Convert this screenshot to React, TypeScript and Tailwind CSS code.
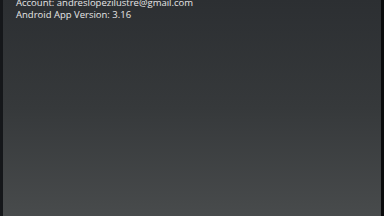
export default function App() {
  return (
    <div className="flex h-[216px] w-[384px] overflow-hidden bg-black">
      <div className="w-[3px] shrink-0 bg-[#15171a]" />
      <div
        className="flex-1 bg-gradient-to-b from-[#2c2f32] via-[#36393b] to-[#484b4c] pl-[13px]"
        style={{ fontFamily: '"Open Sans", "Noto Sans", sans-serif' }}
      >
        <div className="-mt-[3px] text-[9.5px] leading-[12px] text-[#e6e6e6]">
          <p>Account: andreslopezilustre@gmail.com</p>
          <p>Android App Version: 3.16</p>
        </div>
      </div>
      <div className="w-[3px] shrink-0 bg-[#0a0b0c]" />
    </div>
  );
}
